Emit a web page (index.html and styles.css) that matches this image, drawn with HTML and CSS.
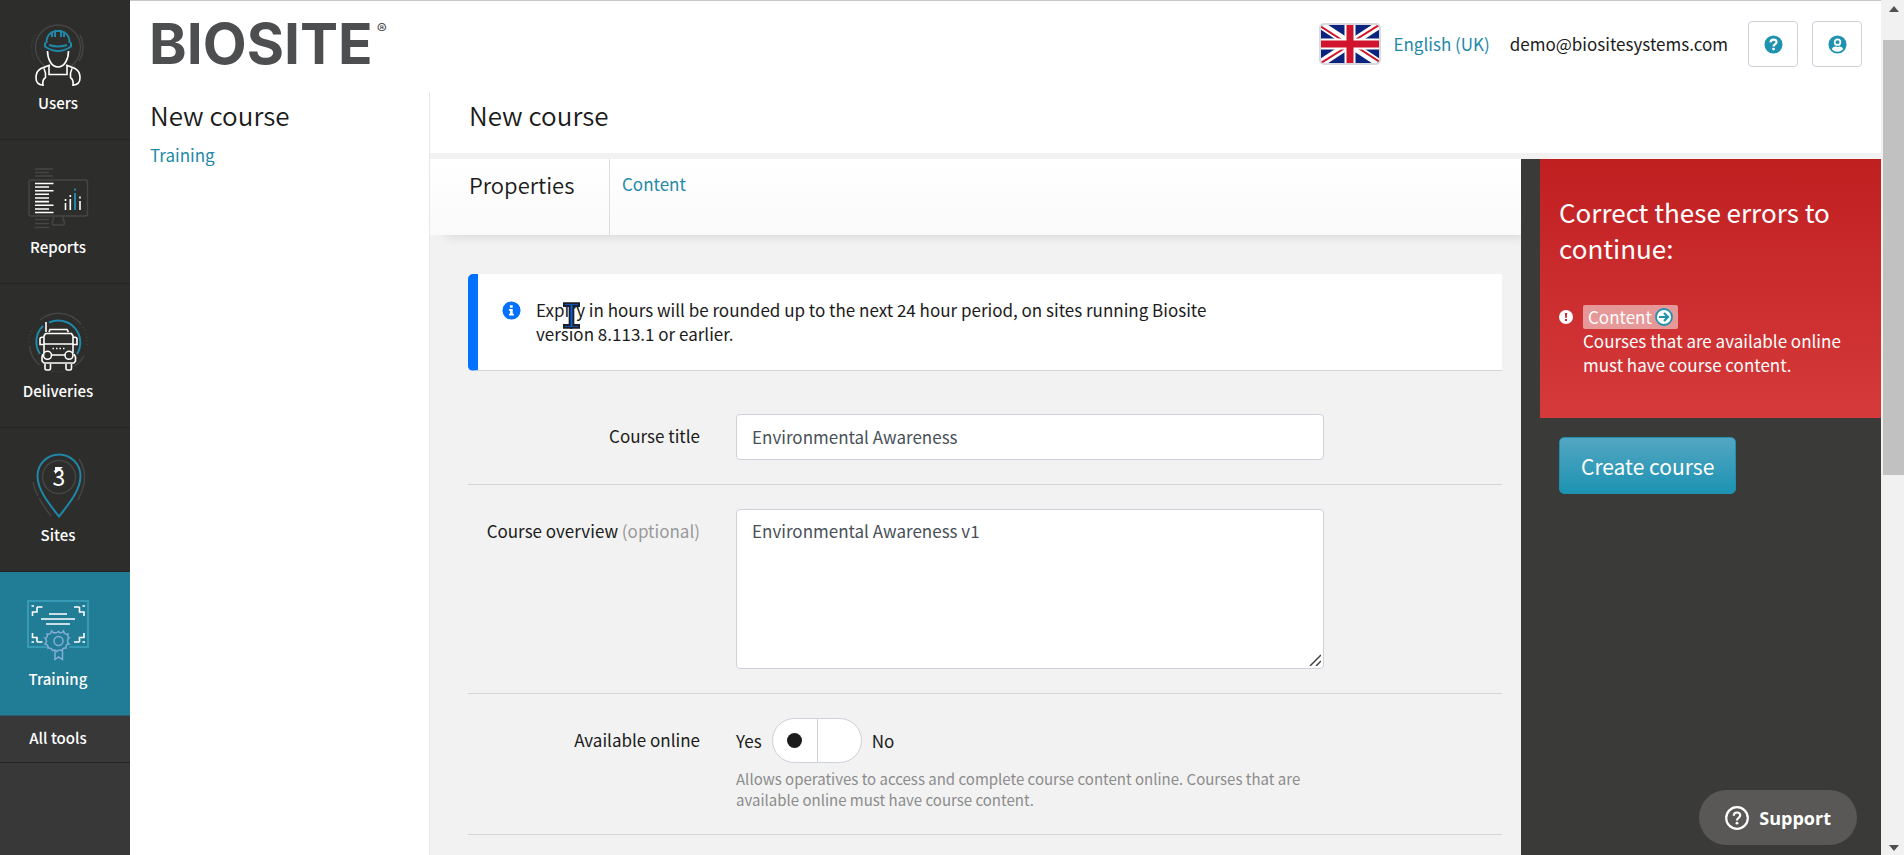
FILE: index.html
```html
<!DOCTYPE html>
<html lang="en-GB">
<head>
<meta charset="utf-8">
<title>New course - Biosite</title>
<meta name="viewport" content="width=device-width, initial-scale=1">
<link rel="stylesheet" href="styles.css">
</head>
<body>
<div class="app">
  <nav class="sidebar" aria-label="Tools">
    <a class="tool" href="#users">
      <svg class="tool-icon" viewBox="0 0 80 64" aria-hidden="true">
        <g class="dim"><circle cx="40" cy="24.5" r="22.5"/><path d="M62 12a26 26 0 0 1-1 26M57 42l-3 3"/><path stroke-dasharray="1 2" d="M17 12a26 26 0 0 0 0 26"/></g>
        <path class="cover" d="M29 27Q29 44 40 44T51 27ZM31 42L18 50V63H62V50L49 42Z"/>
        <g class="teal"><path d="M28.500 20v-2a11.500 11 0 0 1 8.500-10M43 8a11.500 11 0 0 1 8.500 10v2M37 14V8h6v6M34 9v5M46 9v5"/><path d="M27 19.500v4q13 9 26 0v-4M31 22q9 3 18 0"/></g>
        <g class="white"><path d="M29.500 28c0 8 4 16 10.500 16s10.500-8 10.500-16M31 42v9.500h18V42"/><path d="M32 42l-9 3.500Q18 48 18 55q0 6.500 7 7.200Q24 57 27.500 54.500q.5-5-1.500-9M48 42l9 3.500q5 2.500 5 9.500 0 6.500-7 7.200.8-5.200-2.500-7.700-.5-5 1.500-9"/></g>
      </svg>
      <span>Users</span>
    </a>
    <a class="tool" href="#reports">
      <svg class="tool-icon" viewBox="0 0 80 64" aria-hidden="true">
        <g class="dim"><rect x="11" y="13" width="58.500" height="36" rx="2"/><path d="M17 2h18M17 5.500h14M17 9h18M17 52.500h14M17 56.500h14M17 60.500h14M36 49l-2 7q0 2 2 2h8.500q2 0 2-2l-2-7"/></g>
        <path class="white" d="M17 16.500h18.500M17 20h14M17 23.700h18.500M17 27.300h14M17 31h14M17 34.600h14M17 38.300h18.500M17 42h14M17 45.500h18.500"/>
        <path class="white" d="M47.500 32v2M47.500 36v7M52.300 28v2M52.300 32v11M62 29.500v2M62 34v9"/>
        <path class="teal" d="M57 21.500v2M57 26v17"/>
      </svg>
      <span>Reports</span>
    </a>
    <a class="tool" href="#deliveries">
      <svg class="tool-icon" viewBox="0 0 80 64" aria-hidden="true">
        <g class="dim"><path d="M22 9a29 29 0 0 1 41 4M11.500 35a29 29 0 0 0 10 19M57 55a29 29 0 0 0 9-10"/><path stroke-dasharray="1 2.500" d="M13 20q-2 6-2 12M65 16a29 29 0 0 1 4 18M34 60a29 29 0 0 0 14 0"/></g>
        <path class="teal" d="M22 43a22 22 0 0 1 3-28M31 11.500A22 22 0 0 1 59 43"/>
        <g class="white"><path d="M28 11v10M31 21l1-2.500h17l1.500 2.500M27.500 22.500h26l1.500 2.500v17M26 42V25l1.500-2.500M26 33h29M25.500 26q-3.500 0-3.500 2v5.500h3.500M55.500 26q3.500 0 3.500 2v5.500h-3.500M34 44h13"/><circle cx="29.500" cy="44.300" r="4"/><circle cx="51" cy="44.300" r="4"/><path d="M25 43l-1 3v4l2 2h30l1.500-2v-4L56 43M27 53v4.500q0 1.500 1.500 1.500h2.500q1.500 0 1.500-1.500V53M48 53v4.500q0 1.500 1.500 1.500H52q1.500 0 1.500-1.500V53"/><path stroke-dasharray="1.500 2" d="M34.500 37.500h12"/></g>
      </svg>
      <span>Deliveries</span>
    </a>
    <a class="tool" href="#sites">
      <svg class="tool-icon" viewBox="0 0 80 64" aria-hidden="true">
        <g class="dim"><circle cx="41" cy="22" r="16.500"/><path d="M61 4q10 15 2 34l-3 7M15 27q1 7 5 14M21 43q5 9 12 18"/></g>
        <path class="teal" d="M41 61.500C33 51 19.500 36 19.500 21a21.500 21.500 0 0 1 43 0C62.500 36 49 51 41 61.500Z"/>
        <text class="pin-number" x="41" y="31">3</text>
        <path class="pin-flag" d="M37 12h8l-8 7Z"/>
      </svg>
      <span>Sites</span>
    </a>
    <a class="tool tool-current" href="#training" aria-current="page">
      <svg class="tool-icon" viewBox="0 0 80 64" aria-hidden="true">
        <path class="frame" d="M29.500 48H10V2h60v46H51.500"/>
        <path class="white" d="M31 15h18M23 20h34M28 25h24M19 8h5.500M19 8v5h-4.500v4M61.500 8H56M61.500 8v5H66v4M19 43h5.500M19 43v-4.500h-4.500V34M61.500 43H56M61.500 43v-4.500H66V34M13.500 7h2.500M64.500 7h2.500M13.500 43h2.500M64.500 43h2.500"/>
        <g class="rosette"><path d="M40.500 32.500q2 3 5-.5 1 4 4.500 3-.5 4 1 4-3 3 0 6-3.500 0-3 4-3.500-.5-4 2.500-3-1.500-5 1-2-2.500-4.500-1-1-3-4.500-2.500.5-3.500-3-4 3-3 0-6 3 0 2-4 4 1 4.500-3 3 3.500 7 .5Z"/><circle cx="40.500" cy="42" r="4.500"/><path d="M37 51v9.500l3.500-2.500 4 2.500V51"/></g>
      </svg>
      <span>Training</span>
    </a>
    <a class="all-tools" href="#tools">All tools</a>
  </nav>

  <div class="page">
    <header class="header">
      <a class="logo" href="#home" aria-label="Biosite home">BIOSITE<sup>®</sup></a>
      <div class="account">
        <a class="language" href="#language">
          <svg class="flag" viewBox="0 0 58 38" preserveAspectRatio="none" aria-hidden="true">
            <path fill="#0a237d" d="M0 0h58v38H0z"/>
            <path stroke="#fff" stroke-width="8" d="M0 0l58 38M58 0L0 38"/>
            <path stroke="#d0142c" stroke-width="2" d="M0 1.500L27 19M58 0L31 17M58 36.500L31 19M0 38l27-17"/>
            <path stroke="#fff" stroke-width="11" d="M29 0v38M0 19h58"/>
            <path stroke="#d0142c" stroke-width="7" d="M29 0v38M0 19h58"/>
          </svg>
          <span>English (UK)</span>
        </a>
        <span class="email">demo@biositesystems.com</span>
        <button class="icon-button" type="button" aria-label="Help">
          <svg viewBox="0 0 20 20" aria-hidden="true"><circle cx="10" cy="10" r="9.500" fill="#1f92b0"/><path fill="none" stroke="#fff" stroke-width="2.300" d="M6.800 7.700Q7 4.800 10 4.800t3.200 2.600q0 1.400-1.600 2.300T10 12.200"/><circle cx="10" cy="14.800" r="1.500" fill="#fff"/></svg>
        </button>
        <button class="icon-button" type="button" aria-label="Account">
          <svg viewBox="0 0 20 20" aria-hidden="true"><circle cx="10" cy="10" r="9.500" fill="#1f92b0"/><circle cx="10" cy="7.500" r="3" fill="#1f92b0" stroke="#fff" stroke-width="1.800"/><path fill="#fff" d="M4 15q1-3 3.500-3 2.500 1 5 0Q15 12 16 15q-2.500 2.700-6 2.700T4 15Z"/></svg>
        </button>
      </div>
    </header>

    <div class="columns">
      <aside class="context">
        <h2 class="title">New course</h2>
        <a class="link" href="#training">Training</a>
      </aside>

      <main class="main">
        <h1 class="title main-title">New course</h1>
        <div class="workspace">
          <div class="editor">
            <div class="tabs">
              <span class="tab tab-current">Properties</span>
              <a class="tab link" href="#content">Content</a>
            </div>
            <form class="form" id="course-form">
              <div class="notice">
                <svg class="notice-icon" viewBox="0 0 20 20" aria-hidden="true"><circle cx="10" cy="10" r="9.500" fill="#0072ff"/><path fill="#fff" d="M8.300 4.500h3V7h-3zM7.300 8.300h4v5h1.200v1.900H7.300v-1.900h1.200v-3.100H7.300z"/></svg>
                <p>Expiry in hours will be rounded up to the next 24 hour period, on sites running Biosite version 8.113.1 or earlier.</p>
                <svg class="pointer" viewBox="0 0 18 28" aria-hidden="true"><path fill="#0b62d8" stroke="#1a1f2b" stroke-width="2" d="M1 1h16v3h-6v20h6v3H1v-3h6V4H1z"/></svg>
              </div>
              <div class="field">
                <label class="label" for="title">Course title</label>
                <input class="control" id="title" type="text" value="Environmental Awareness">
              </div>
              <div class="field">
                <label class="label" for="overview">Course overview <span class="muted">(optional)</span></label>
                <div class="textarea-wrap">
                  <textarea class="control control-tall" id="overview">Environmental Awareness v1</textarea>
                  <svg class="grip" viewBox="0 0 12 12" aria-hidden="true"><path stroke="#444" stroke-width="1.500" d="M1 12L12 1M7 12l5-5"/></svg>
                </div>
              </div>
              <div class="field" role="radiogroup" aria-labelledby="online-label">
                <span class="label" id="online-label">Available online</span>
                <div class="answer">
                  <div class="choice">
                    <label for="online-yes">Yes</label>
                    <span class="switch">
                      <input class="half" id="online-yes" name="online" type="radio" checked>
                      <input class="half" id="online-no" name="online" type="radio">
                    </span>
                    <label for="online-no">No</label>
                  </div>
                  <p class="hint">Allows operatives to access and complete course content online. Courses that are available online must have course content.</p>
                </div>
              </div>
            </form>
          </div>

          <aside class="actions">
            <section class="errors">
              <h2 class="errors-title">Correct these errors to continue:</h2>
              <div class="error">
                <svg class="error-icon" viewBox="0 0 14 14" aria-hidden="true"><circle cx="7" cy="7" r="7" fill="#fff"/><path fill="#cb2a2c" d="M5.800 3h2.400l-.5 5H6.300zM6 9h2v2H6z"/></svg>
                <div>
                  <a class="error-link" href="#content">Content<svg viewBox="0 0 18 18" aria-hidden="true"><circle cx="9" cy="9" r="8" fill="#fff" stroke="#1f92b0" stroke-width="1.800"/><path fill="none" stroke="#1f92b0" stroke-width="2.200" d="M4 9h9M9 5l4 4-4 4"/></svg></a>
                  <p>Courses that are available online must have course content.</p>
                </div>
              </div>
            </section>
            <button class="create" type="submit" form="course-form">Create course</button>
          </aside>
        </div>
      </main>
    </div>
  </div>

  <div class="scrollbar" aria-hidden="true">
    <svg viewBox="0 0 10 6"><path d="M0 6l5-6 5 6z"/></svg>
    <div class="track"><div class="thumb"></div></div>
    <svg viewBox="0 0 10 6"><path d="M0 0l5 6 5-6z"/></svg>
  </div>
</div>

<button class="support" type="button">
  <svg viewBox="0 0 24 24" aria-hidden="true"><g fill="none" stroke="#fff" stroke-width="2.200"><circle cx="12" cy="12" r="10.800"/><path d="M8.800 9.700q0-3.200 3.200-3.200t3.200 2.800q0 1.400-1.600 2.500T12 14.500"/></g><circle cx="12" cy="17.200" r="1.400" fill="#fff"/></svg>
  <span>Support</span>
</button>
</body>
</html>
```
FILE: styles.css
```css
* { box-sizing: border-box; }
body {
  margin: 0;
  color: #1b1b1b;
  background: #fff;
  font: 400 17px/24px "Noto Sans CJK SC", "Noto Sans", sans-serif;
}
h1, h2, p { margin: 0; }
a { color: #2389a8; text-decoration: none; }
button, input, textarea { font: inherit; }

.app { display: flex; height: 100vh; overflow: hidden; }

/* Tool navigation */
.sidebar { flex: none; width: 130px; margin-top: -4px; background: #383838; }
.tool, .all-tools {
  display: flex;
  flex-direction: column;
  align-items: center;
  padding-right: 14px;
  border-bottom: 1px solid #222;
  color: #fff;
  font-size: 15px;
  font-weight: 500;
}
.tool { height: 144px; padding-top: 27px; gap: 4px; background: #2d2d2b; }
.tool-current { background: #217c95; border-bottom-color: #2a5d70; }
.all-tools { padding-top: 10px; padding-bottom: 12px; }
.tool-icon { width: 80px; height: 64px; overflow: visible; fill: none; stroke-width: 2; }
.dim { stroke: #454545; stroke-width: 1.5; }
.teal { stroke: #1f87a8; }
.white { stroke: #fff; stroke-width: 1.6; }
.cover { fill: #2d2d2b; }
.frame { stroke: #369ab4; }
.rosette { stroke: #83add6; stroke-width: 1.5; }
.pin-number { fill: #fff; font-size: 23px; font-weight: 400; text-anchor: middle; }
.pin-flag { fill: #fff; }

/* Header */
.page { flex: 1; min-width: 0; display: flex; flex-direction: column; border-top: 1px solid #c6c6c6; }
.header { flex: none; height: 91px; display: flex; justify-content: space-between; padding: 0 19px; }
.logo { display: flex; gap: 4px; padding-top: 14px; color: #4d4e50; font: 700 57px/57px Inter, sans-serif; }
.logo sup { font-size: 15px; line-height: 28px; font-weight: 400; }
.account { display: flex; align-items: center; height: 86px; }
.language { display: flex; align-items: center; gap: 12px; margin-right: 20px; }
.flag { width: 62px; height: 42px; border: 2px solid #d8dae0; border-radius: 5px; }
.icon-button {
  display: grid;
  place-items: center;
  width: 50px;
  height: 46px;
  margin-left: 14px;
  padding: 0;
  border: 1px solid #cdd1da;
  border-radius: 4px;
  background: #fff;
}
.email + .icon-button { margin-left: 20px; }
.icon-button svg { width: 19px; height: 19px; }

/* Page columns */
.columns { flex: 1; display: flex; min-height: 0; }
.context { flex: none; width: 300px; padding-left: 20px; border-right: 1px solid #e6e6e6; }
.title { padding: 8px 0 13px; font-size: 26px; line-height: 30px; font-weight: 350; }
.context .link { display: block; }
.main { flex: 1; min-width: 0; display: flex; flex-direction: column; }
.main-title { height: 61px; padding-left: 39px; }
.workspace { flex: 1; display: flex; min-height: 0; border-top: 6px solid #f2f2f2; }
.editor { flex: 1; min-width: 0; background: #f2f2f2; }
.tabs {
  display: flex;
  height: 76px;
  padding-left: 39px;
  background: linear-gradient(#fff, #fafafa);
  box-shadow: 10px 6px 12px -6px #00000026;
}
.tab { padding: 13px 12px; }
.tab-current { width: 141px; padding-left: 0; border-right: 1px solid #dedede; font-size: 22px; font-weight: 350; }

/* Course form */
.form { padding: 39px 19px 0 38px; }
.notice {
  position: relative;
  display: flex;
  gap: 15px;
  padding: 24px;
  border-left: 10px solid #0072ff;
  border-bottom: 1px solid #d5d5d5;
  border-radius: 5px 0 0 5px;
  background: #fff;
  margin-bottom: 19px;
}
.notice p { max-width: 700px; }
.notice-icon { flex: none; width: 19px; height: 19px; margin-top: 3px; }
.pointer { position: absolute; left: 85px; top: 28px; width: 17px; height: 27px; }
.field {
  display: grid;
  grid-template-columns: 232px 1fr;
  column-gap: 36px;
  padding: 24px 0;
  border-bottom: 1px solid #d6d6d9;
}
.label { padding-top: 10px; text-align: right; }
.muted { color: #999; }
.control {
  display: block;
  width: 100%;
  max-width: 588px;
  height: 46px;
  padding: 9px 15px 11px;
  border: 1px solid #cdd1da;
  border-radius: 4px;
  background: #fff;
  color: #495057;
}
.control-tall { height: 160px; resize: none; }
.textarea-wrap { position: relative; max-width: 588px; }
.grip { position: absolute; right: 3px; bottom: 3px; width: 12px; height: 12px; }
.choice { display: flex; align-items: center; gap: 10px; }
.switch { display: flex; border: 1px solid #cdd1da; border-radius: 23px; overflow: hidden; background: #fff; }
.half { appearance: none; display: grid; place-items: center; width: 44px; height: 43px; margin: 0; }
.half + .half { border-left: 1px solid #cdd1da; }
.half:checked::before { content: ""; width: 15px; height: 15px; border-radius: 50%; background: #1b1b1b; }
.hint { max-width: 588px; padding-top: 5px; color: #8c8c8c; font-size: 15px; line-height: 21px; }

/* Errors and actions */
.actions { flex: none; width: 360px; padding-left: 19px; background: #3a3a38; }
.errors { padding: 35px 19px 41px; background: linear-gradient(#c01f20, #d63a3b); color: #fff; }
.errors-title { margin-bottom: 39px; font-size: 26px; line-height: 36px; font-weight: 400; }
.error { display: flex; gap: 10px; }
.error-icon { flex: none; width: 14px; height: 14px; margin-top: 5px; }
.error-link { display: inline-flex; align-items: center; gap: 3px; padding: 0 5px; border-radius: 2px; background: #ffffff80; color: #fff; }
.error-link svg { width: 18px; height: 18px; }
.create {
  margin: 19px;
  height: 57px;
  padding: 0 21px;
  border: 1px solid #1f8fae;
  border-radius: 5px;
  background: linear-gradient(#54a6c2, #1c93b2);
  color: #fff;
  font-size: 21px;
}

/* Window scrollbar */
.scrollbar { flex: none; width: 23px; display: flex; flex-direction: column; align-items: center; padding: 6px 0 4px 2px; background: #f1f1f1; }
.scrollbar svg { width: 10px; height: 6px; fill: #505050; }
.track { flex: 1; align-self: stretch; padding: 28px 0; }
.thumb { height: 56%; background: #c1c1c1; }

.support {
  position: fixed;
  right: 47px;
  bottom: 10px;
  display: flex;
  align-items: center;
  gap: 10px;
  height: 55px;
  padding: 0 26px;
  border: 0;
  border-radius: 28px;
  background: #595856;
  color: #fff;
  font: 700 18px/24px "Open Sans", "Noto Sans", sans-serif;
}
.support svg { width: 24px; height: 24px; }
```
